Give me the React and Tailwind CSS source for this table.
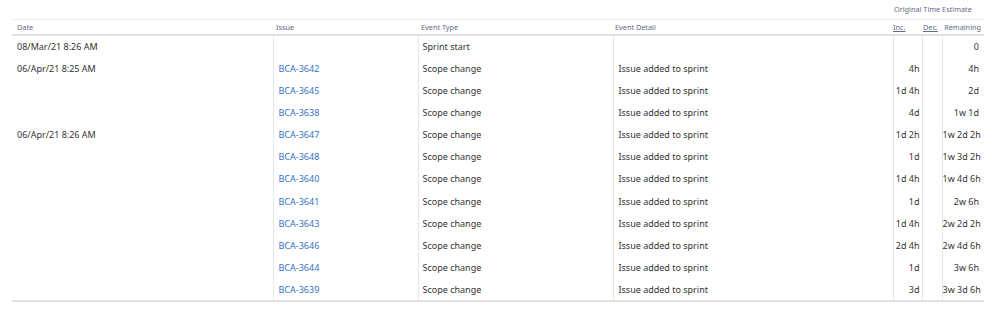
import React from 'react';

const rows = [
  { date: '08/Mar/21 8:26 AM', issue: '', type: 'Sprint start', detail: '', inc: '', rem: '0' },
  { date: '06/Apr/21 8:25 AM', issue: 'BCA-3642', type: 'Scope change', detail: 'Issue added to sprint', inc: '4h', rem: '4h' },
  { date: '', issue: 'BCA-3645', type: 'Scope change', detail: 'Issue added to sprint', inc: '1d 4h', rem: '2d' },
  { date: '', issue: 'BCA-3638', type: 'Scope change', detail: 'Issue added to sprint', inc: '4d', rem: '1w 1d' },
  { date: '06/Apr/21 8:26 AM', issue: 'BCA-3647', type: 'Scope change', detail: 'Issue added to sprint', inc: '1d 2h', rem: '1w 2d 2h' },
  { date: '', issue: 'BCA-3648', type: 'Scope change', detail: 'Issue added to sprint', inc: '1d', rem: '1w 3d 2h' },
  { date: '', issue: 'BCA-3640', type: 'Scope change', detail: 'Issue added to sprint', inc: '1d 4h', rem: '1w 4d 6h' },
  { date: '', issue: 'BCA-3641', type: 'Scope change', detail: 'Issue added to sprint', inc: '1d', rem: '2w 6h' },
  { date: '', issue: 'BCA-3643', type: 'Scope change', detail: 'Issue added to sprint', inc: '1d 4h', rem: '2w 2d 2h' },
  { date: '', issue: 'BCA-3646', type: 'Scope change', detail: 'Issue added to sprint', inc: '2d 4h', rem: '2w 4d 6h' },
  { date: '', issue: 'BCA-3644', type: 'Scope change', detail: 'Issue added to sprint', inc: '1d', rem: '3w 6h' },
  { date: '', issue: 'BCA-3639', type: 'Scope change', detail: 'Issue added to sprint', inc: '3d', rem: '3w 3d 6h' },
];

export default function App() {
  return (
    <div className="bg-white w-[999px] h-[326px] px-[12px] font-['Noto_Sans',sans-serif]">
      <table className="table-fixed border-collapse w-[972px]">
        <colgroup>
          <col className="w-[261px]" />
          <col className="w-[145px]" />
          <col className="w-[195px]" />
          <col className="w-[280px]" />
          <col className="w-[29px]" />
          <col className="w-[20px]" />
          <col className="w-[42px]" />
        </colgroup>
        <thead className="text-[7.3px] text-[#5e6c84]">
          <tr className="h-[19px] border-b border-[#ebecf0]">
            <th colSpan={4}></th>
            <th colSpan={3} className="text-left font-normal pl-[1px] pt-[1px] whitespace-nowrap">
              Original Time Estimate
            </th>
          </tr>
          <tr className="h-[16px] border-b-2 border-[#dfe1e6]">
            <th className="text-left font-normal pl-[5px] pt-[1px]">Date</th>
            <th className="text-left font-normal pl-[3px] pt-[1px]">Issue</th>
            <th className="text-left font-normal pl-[3px] pt-[1px]">Event Type</th>
            <th className="text-left font-normal pl-[2px] pt-[1px]">Event Detail</th>
            <th className="text-left font-normal pt-[1px]">
              <span className="underline underline-offset-1">Inc.</span>
            </th>
            <th className="text-left font-normal pl-[1px] pt-[1px]">
              <span className="underline underline-offset-1">Dec.</span>
            </th>
            <th className="text-right font-normal pr-[3px] pt-[1px]">Remaining</th>
          </tr>
        </thead>
        <tbody className="text-[9px] text-[#333333] border-b-2 border-[#dfe1e6]">
          {rows.map((r, i) => (
            <tr key={i} className="h-[22.2px]">
              <td className="pl-[5px] whitespace-nowrap">{r.date}</td>
              <td className="pl-[5px] border-l border-[#e6e6e6] text-[#3572c6]">{r.issue}</td>
              <td className="pl-[4px] border-l border-[#e6e6e6]">{r.type}</td>
              <td className="pl-[5px] border-l border-[#e6e6e6]">{r.detail}</td>
              <td className="text-right pr-[2px] border-l border-[#e6e6e6] whitespace-nowrap">{r.inc}</td>
              <td className="border-l border-[#e6e6e6]"></td>
              <td className="text-right pr-[5px] border-l border-[#e6e6e6] whitespace-nowrap">{r.rem}</td>
            </tr>
          ))}
        </tbody>
      </table>
    </div>
  );
}
